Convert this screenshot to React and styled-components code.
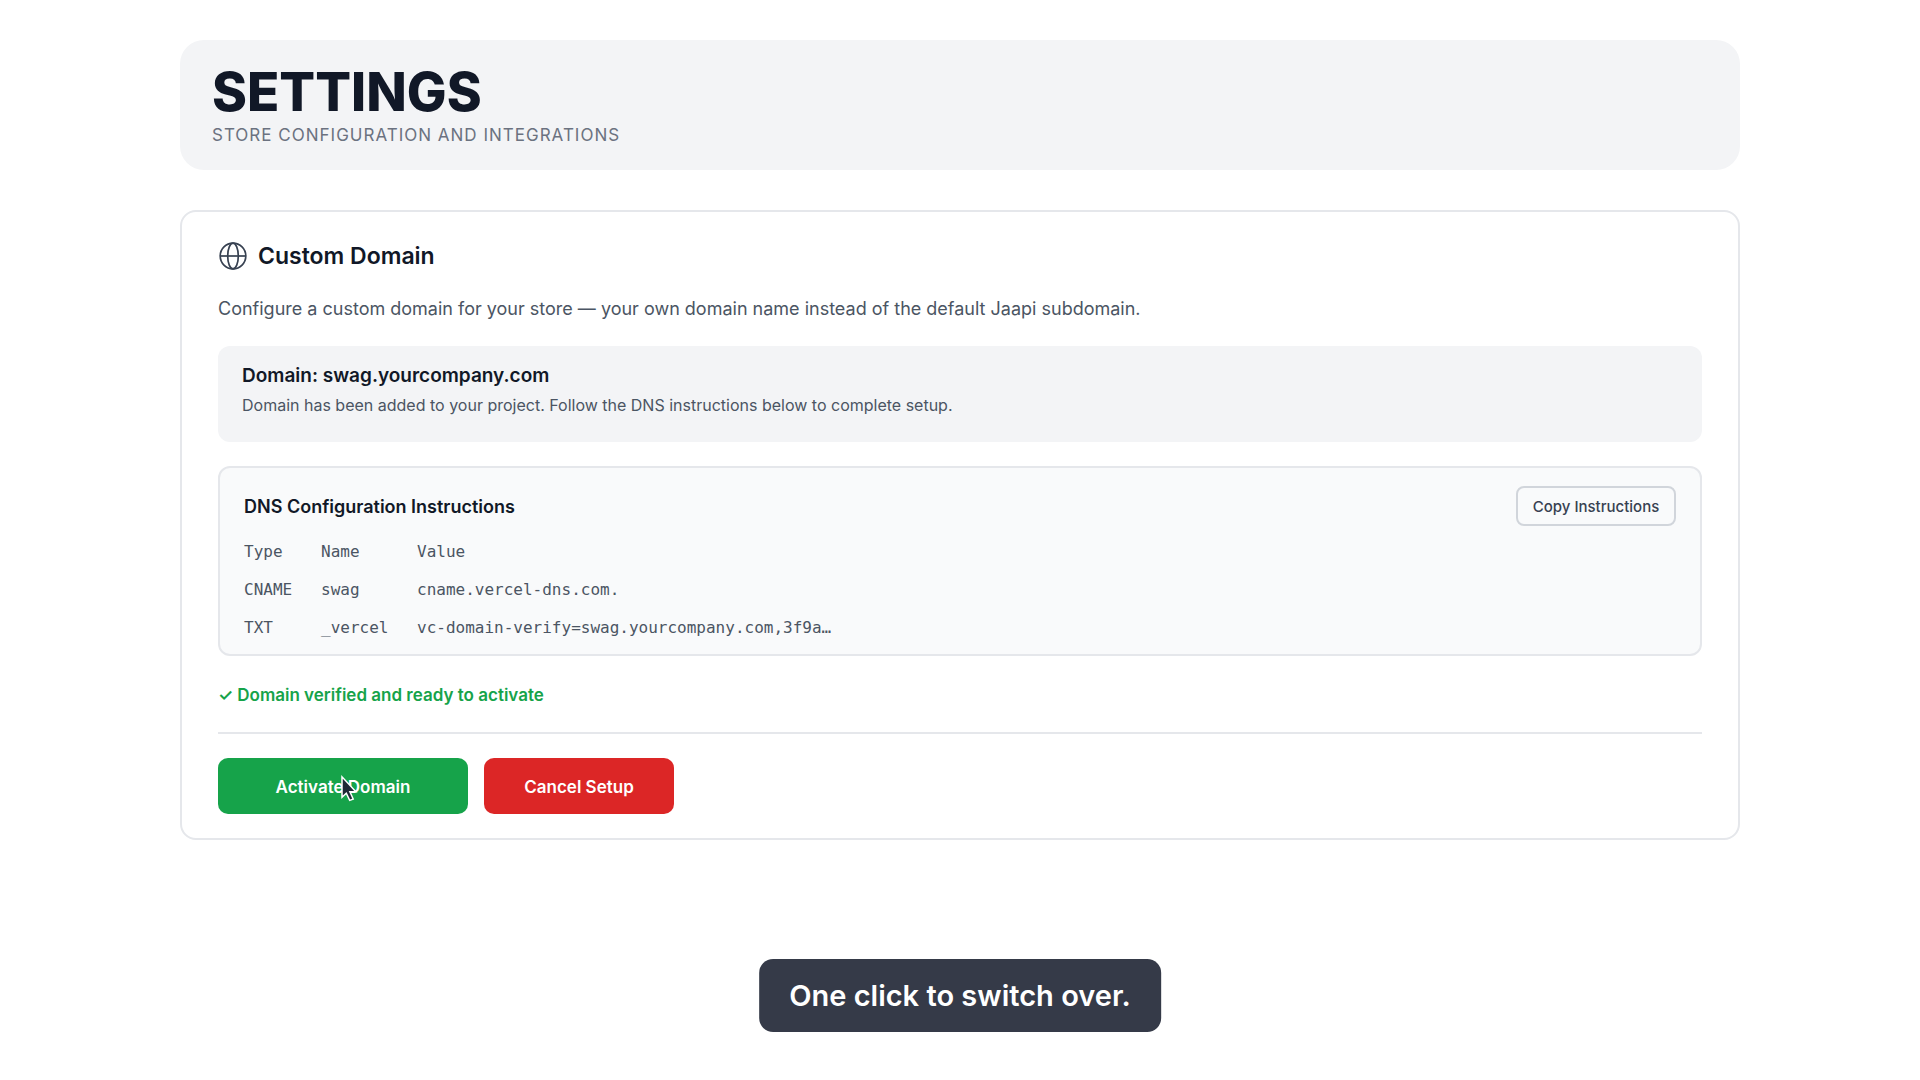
import React from "react";
import styled, { createGlobalStyle } from "styled-components";

const GlobalStyle = createGlobalStyle`
  *, *::before, *::after { box-sizing: border-box; }
  body {
    margin: 0;
    background: #ffffff;
    color: #111827;
    font-family: Inter, "Liberation Sans", sans-serif;
  }
  h1, h2, h3, p { margin: 0; }
`;

const Page = styled.main`
  max-width: 1640px;
  margin: 0 auto;
  padding: 40px 40px 160px;
  display: flex;
  flex-direction: column;
  gap: 40px;
`;

const Header = styled.header`
  display: flex;
  flex-direction: column;
  gap: 4px;
  padding: 24px 32px;
  border-radius: 24px;
  background: #f3f4f6;
`;

const PageTitle = styled.h1`
  font-size: 53px;
  line-height: 56px;
  font-weight: 800;
`;

const PageSubtitle = styled.p`
  font-size: 17px;
  line-height: 22px;
  letter-spacing: 1px;
  text-transform: uppercase;
  color: #6b7280;
`;

const Card = styled.section`
  display: flex;
  flex-direction: column;
  padding: 28px 36px 24px;
  border: 2px solid #e5e7eb;
  border-radius: 16px;
`;

const CardHeading = styled.div`
  display: flex;
  align-items: center;
  gap: 10px;
  color: #374151;
`;

const CardTitle = styled.h2`
  font-size: 23px;
  line-height: 32px;
  font-weight: 600;
  color: #111827;
`;

const Description = styled.p`
  margin: 20px 0;
  font-size: 18px;
  line-height: 34px;
  color: #4b5563;
`;

const DomainBox = styled.div`
  display: flex;
  flex-direction: column;
  gap: 4px;
  padding: 16px 24px 26px;
  border-radius: 12px;
  background: #f3f4f6;
`;

const DomainName = styled.h3`
  font-size: 19px;
  line-height: 28px;
  font-weight: 600;
`;

const DomainNote = styled.p`
  font-size: 16px;
  line-height: 22px;
  color: #4b5563;
`;

const DnsBox = styled.div`
  display: flex;
  flex-direction: column;
  gap: 7px;
  margin: 24px 0;
  padding: 18px 24px 7px;
  border: 2px solid #e5e7eb;
  border-radius: 12px;
  background: #f9fafb;
`;

const DnsHeading = styled.div`
  display: flex;
  align-items: center;
  justify-content: space-between;
`;

const DnsTitle = styled.h3`
  padding-top: 2px;
  font-size: 18px;
  line-height: 28px;
  font-weight: 600;
`;

const CopyButton = styled.button`
  width: 160px;
  height: 40px;
  padding: 2px 0 0;
  border: 2px solid #d1d5db;
  border-radius: 8px;
  background: transparent;
  color: #374151;
  font: 500 15px/20px Inter, "Liberation Sans", sans-serif;
  cursor: pointer;
`;

const DnsTable = styled.table`
  width: 100%;
  table-layout: fixed;
  border-collapse: collapse;
  font-family: "DejaVu Sans Mono", "Liberation Mono", monospace;
  font-size: 16px;
  line-height: 38px;
  color: #4b5563;
`;

const Column = styled.col`
  width: ${({ $width }) => $width};
`;

const Cell = styled.td`
  padding: 0;
  text-align: left;
  font-weight: 400;
  white-space: nowrap;
`;

const Status = styled.p`
  font-size: 17px;
  line-height: 30px;
  font-weight: 600;
  color: #16a34a;
`;

const Actions = styled.div`
  display: flex;
  gap: 16px;
  margin-top: 22px;
  padding-top: 24px;
  border-top: 2px solid #e5e7eb;
`;

const ActionButton = styled.button`
  position: relative;
  width: ${({ $wide }) => ($wide ? "250px" : "190px")};
  height: 56px;
  padding: 2px 0 0;
  border: 0;
  border-radius: 10px;
  background: ${({ $danger }) => ($danger ? "#dc2626" : "#16a34a")};
  color: #ffffff;
  font: 600 17px/24px Inter, "Liberation Sans", sans-serif;
  cursor: pointer;
`;

const Pointer = styled.svg`
  position: absolute;
  left: 122px;
  top: 16px;
  width: 18px;
  height: 28px;
  pointer-events: none;
`;

const Caption = styled.div`
  position: fixed;
  left: 50%;
  bottom: 48px;
  transform: translateX(-50%);
  padding: 17px 30px 16px;
  border-radius: 14px;
  background: #353a48;
  color: #ffffff;
  font-size: 29px;
  line-height: 40px;
  font-weight: 600;
  white-space: nowrap;
`;

const records = [
  { type: "CNAME", name: "swag", value: "cname.vercel-dns.com." },
  { type: "TXT", name: "_vercel", value: "vc-domain-verify=swag.yourcompany.com,3f9a…" },
];

function GlobeIcon() {
  return (
    <svg width="30" height="30" viewBox="0 0 30 30" fill="none" stroke="currentColor" strokeWidth="1.7" aria-hidden="true">
      <circle cx="15" cy="15" r="12.8" />
      <ellipse cx="15" cy="15" rx="5.3" ry="12.8" />
      <path d="M2.2 15h25.6" />
    </svg>
  );
}

function MousePointer() {
  return (
    <Pointer viewBox="0 0 18 28" aria-hidden="true">
      <path
        d="M2 2.8V23.2L6.3 19.2L9.7 26.4L13.2 25L9.9 17.8H15.9Z"
        fill="#1f2937"
        stroke="#ffffff"
        strokeWidth="1.5"
      />
    </Pointer>
  );
}

export default function App() {
  return (
    <>
      <GlobalStyle />
      <Page>
        <Header>
          <PageTitle>SETTINGS</PageTitle>
          <PageSubtitle>Store configuration and integrations</PageSubtitle>
        </Header>
        <Card>
          <CardHeading>
            <GlobeIcon />
            <CardTitle>Custom Domain</CardTitle>
          </CardHeading>
          <Description>
            Configure a custom domain for your store — your own domain name instead of the default Jaapi subdomain.
          </Description>
          <DomainBox>
            <DomainName>Domain: swag.yourcompany.com</DomainName>
            <DomainNote>
              Domain has been added to your project. Follow the DNS instructions below to complete setup.
            </DomainNote>
          </DomainBox>
          <DnsBox>
            <DnsHeading>
              <DnsTitle>DNS Configuration Instructions</DnsTitle>
              <CopyButton type="button">Copy Instructions</CopyButton>
            </DnsHeading>
            <DnsTable>
              <colgroup>
                <Column $width="77px" />
                <Column $width="96px" />
                <Column $width="auto" />
              </colgroup>
              <thead>
                <tr>
                  <Cell as="th" scope="col">Type</Cell>
                  <Cell as="th" scope="col">Name</Cell>
                  <Cell as="th" scope="col">Value</Cell>
                </tr>
              </thead>
              <tbody>
                {records.map((record) => (
                  <tr key={record.type}>
                    <Cell>{record.type}</Cell>
                    <Cell>{record.name}</Cell>
                    <Cell>{record.value}</Cell>
                  </tr>
                ))}
              </tbody>
            </DnsTable>
          </DnsBox>
          <Status>✓ Domain verified and ready to activate</Status>
          <Actions>
            <ActionButton type="button" $wide>
              Activate Domain
              <MousePointer />
            </ActionButton>
            <ActionButton type="button" $danger>Cancel Setup</ActionButton>
          </Actions>
        </Card>
      </Page>
      <Caption>One click to switch over.</Caption>
    </>
  );
}
